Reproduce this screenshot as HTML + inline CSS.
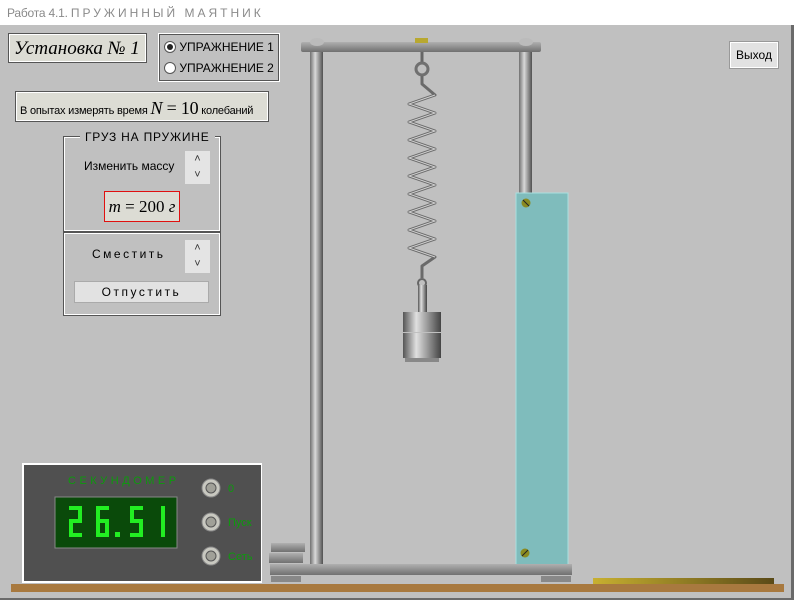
<!DOCTYPE html>
<html><head><meta charset="utf-8"><style>
*{margin:0;padding:0;box-sizing:border-box}
body{width:794px;height:600px;background:#c0c0c0;position:relative;overflow:hidden;font-family:"Liberation Sans",sans-serif}
.a{position:absolute;white-space:nowrap}
.title{left:0;top:0;width:794px;height:25px;background:#fff;color:#8a8a8a;font-size:12px;padding:6px 0 0 7px;letter-spacing:-0.2px}
.title span{letter-spacing:3px}
.box{background:#dcdcd4;border:1px solid #fff;outline:1px solid #555}
</style></head><body>
<div class="a title">Работа 4.1. <span>ПРУЖИННЫЙ МАЯТНИК</span></div>
<div class="a" style="right:0;top:25px;width:3px;height:575px;background:#6a6a6a"></div>
<div class="a" style="left:0;bottom:0;width:794px;height:2px;background:#6a6a6a"></div>

<div class="a box" style="left:9px;top:34px;width:137px;height:28px;font-family:'Liberation Serif',serif;font-style:italic;font-size:19px;padding:3px 0 0 4px">Установка № 1</div>
<div class="a" style="left:159px;top:34px;width:120px;height:47px;border:1px solid #555;outline:1px solid #fff;font-size:12px">
 <div style="position:absolute;left:4px;top:5px"><span style="display:inline-block;width:12px;height:12px;border-radius:50%;background:#fff;border:1px solid #555;vertical-align:-2px;position:relative"><span style="position:absolute;left:2px;top:2px;width:6px;height:6px;border-radius:50%;background:#222"></span></span> УПРАЖНЕНИЕ 1</div>
 <div style="position:absolute;left:4px;top:26px"><span style="display:inline-block;width:12px;height:12px;border-radius:50%;background:#fff;border:1px solid #555;vertical-align:-2px"></span> УПРАЖНЕНИЕ 2</div>
</div>
<div class="a box" style="left:16px;top:92px;width:252px;height:29px;font-size:11px;padding:5px 0 0 3px;letter-spacing:-0.2px">В опытах измерять время <span style="font-family:'Liberation Serif',serif;font-size:18px"><i>N</i> = 10</span> колебаний</div>

<div class="a" style="left:64px;top:137px;width:156px;height:94px;border:1px solid #fff;outline:1px solid #555"></div>
<div class="a" style="left:64px;top:233px;width:156px;height:82px;border:1px solid #fff;outline:1px solid #555"></div>
<div class="a" style="left:80px;top:130px;background:#c0c0c0;font-size:12px;padding:0 5px;letter-spacing:0.8px">ГРУЗ НА ПРУЖИНЕ</div>
<div class="a" style="left:84px;top:159px;font-size:12px">Изменить массу</div>
<div class="a" style="left:185px;top:151px;width:25px;height:33px;background:#e4e4e4;font-size:11px;text-align:center;line-height:16px;color:#333">˄<br>˅</div>
<div class="a" style="left:104px;top:191px;width:76px;height:31px;border:1px solid #e01010;background:#dcdcd4;font-family:'Liberation Serif',serif;font-size:17px;text-align:center;line-height:29px"><i>m</i> = 200 <i>г</i></div>
<div class="a" style="left:92px;top:247px;font-size:12px;letter-spacing:2.5px">Сместить</div>
<div class="a" style="left:185px;top:240px;width:25px;height:33px;background:#e4e4e4;font-size:11px;text-align:center;line-height:16px;color:#333">˄<br>˅</div>
<div class="a" style="left:74px;top:281px;width:135px;height:22px;background:#e2e2e2;border:1px solid #aaa;font-size:12px;text-align:center;line-height:20px;letter-spacing:2.5px">Отпустить</div>

<div class="a" style="left:730px;top:42px;width:48px;height:26px;background:#e2e2e2;border:1px solid #fff;outline:1px solid #999;font-size:12px;text-align:center;line-height:24px">Выход</div>

<svg class="a" style="left:0;top:0" width="794" height="600">
<defs>
<linearGradient id="post" x1="0" x2="1"><stop offset="0" stop-color="#707070"/><stop offset=".4" stop-color="#d8d8d8"/><stop offset="1" stop-color="#505050"/></linearGradient>
<linearGradient id="bar" x1="0" y1="0" x2="0" y2="1"><stop offset="0" stop-color="#b0b0b0"/><stop offset="1" stop-color="#707070"/></linearGradient>
<linearGradient id="mass" x1="0" x2="1"><stop offset="0" stop-color="#555"/><stop offset=".35" stop-color="#e0e0e0"/><stop offset="1" stop-color="#444"/></linearGradient>
<linearGradient id="gold" x1="0" x2="1"><stop offset="0" stop-color="#c8b030"/><stop offset="1" stop-color="#5a4a18"/></linearGradient>
</defs>
<rect x="11" y="584" width="773" height="8" fill="#a8793f"/>
<rect x="593" y="578" width="181" height="6" fill="url(#gold)"/>
<rect x="310" y="50" width="13" height="515" fill="url(#post)"/>
<rect x="519" y="50" width="13" height="150" fill="url(#post)"/>
<rect x="301" y="42" width="240" height="10" rx="2" fill="url(#bar)"/>
<ellipse cx="317" cy="42" rx="7" ry="4" fill="#bbb"/><ellipse cx="526" cy="42" rx="7" ry="4" fill="#bbb"/>
<rect x="415" y="38" width="13" height="5" fill="#b8a830"/>
<line x1="422" y1="52" x2="422" y2="64" stroke="#666" stroke-width="3"/>
<circle cx="422" cy="69" r="6" fill="none" stroke="#707070" stroke-width="3"/>
<polyline fill="none" stroke="#6a6a6a" stroke-width="3" stroke-linejoin="round" points="422,76 422,84 435,95 409,104 435,113 409,122 435,131 409,140 435,149 409,158 435,167 409,176 435,185 409,194 435,203 409,212 435,221 409,230 435,239 409,248 435,257 422,266 422,278"/>
<polyline fill="none" stroke="#d0d0d0" stroke-width="1" points="435,95 409,104 435,113 409,122 435,131 409,140 435,149 409,158 435,167 409,176 435,185 409,194 435,203 409,212 435,221 409,230 435,239 409,248 435,257"/>
<circle cx="422" cy="283" r="4" fill="none" stroke="#666" stroke-width="2"/>
<rect x="418" y="285" width="9" height="28" fill="url(#mass)"/>
<rect x="403" y="312" width="38" height="12" fill="url(#mass)"/>
<rect x="403" y="324" width="38" height="8" fill="url(#mass)"/>
<rect x="403" y="333" width="38" height="25" fill="url(#mass)"/>
<rect x="405" y="358" width="34" height="4" fill="#888"/>
<rect x="516" y="193" width="52" height="372" fill="#7fbcbc" stroke="#a8e0e0"/>
<circle cx="526" cy="203" r="4.5" fill="#8a8a20"/><line x1="523" y1="200" x2="529" y2="206" stroke="#222"/>
<circle cx="525" cy="553" r="4.5" fill="#8a8a20"/><line x1="522" y1="556" x2="528" y2="550" stroke="#222"/>
<rect x="270" y="564" width="302" height="11" fill="url(#bar)"/>
<rect x="271" y="576" width="30" height="6" fill="#888"/><rect x="541" y="576" width="30" height="6" fill="#888"/>
<rect x="271" y="543" width="34" height="9" fill="url(#bar)"/>
<rect x="269" y="553" width="34" height="10" fill="url(#bar)"/>
<rect x="22" y="463" width="240" height="120" fill="#fff"/>
<rect x="24" y="465" width="237" height="116" fill="#505050"/>
<rect x="55" y="497" width="122" height="51" fill="#0a4a0a" stroke="#888"/>
<text x="68" y="484" fill="#0d9a0d" font-size="11" letter-spacing="3.5" font-family="Liberation Sans">СЕКУНДОМЕР</text>
<g stroke="#22ee22" stroke-width="4" fill="none" stroke-linecap="square">
<path d="M71 508 H80 V521 H71 V535 H80"/>
<path d="M107 508 H98 V535 H107 V521 H98"/>
<path d="M141 508 H132 V521 H141 V535 H132"/>
<path d="M163 508 V535"/>
</g>
<rect x="115" y="532" width="5" height="5" fill="#22ee22"/>
<g fill="#c8c8c0" stroke="#888"><circle cx="211" cy="488" r="9"/><circle cx="211" cy="522" r="9"/><circle cx="211" cy="556" r="9"/></g>
<g fill="#a0a098" stroke="#555"><circle cx="211" cy="488" r="5"/><circle cx="211" cy="522" r="5"/><circle cx="211" cy="556" r="5"/></g>
<g fill="#0d9a0d" font-size="11" font-family="Liberation Sans"><text x="228" y="492">0</text><text x="228" y="526">Пуск</text><text x="228" y="560">Сеть</text></g>
</svg>
</body></html>
